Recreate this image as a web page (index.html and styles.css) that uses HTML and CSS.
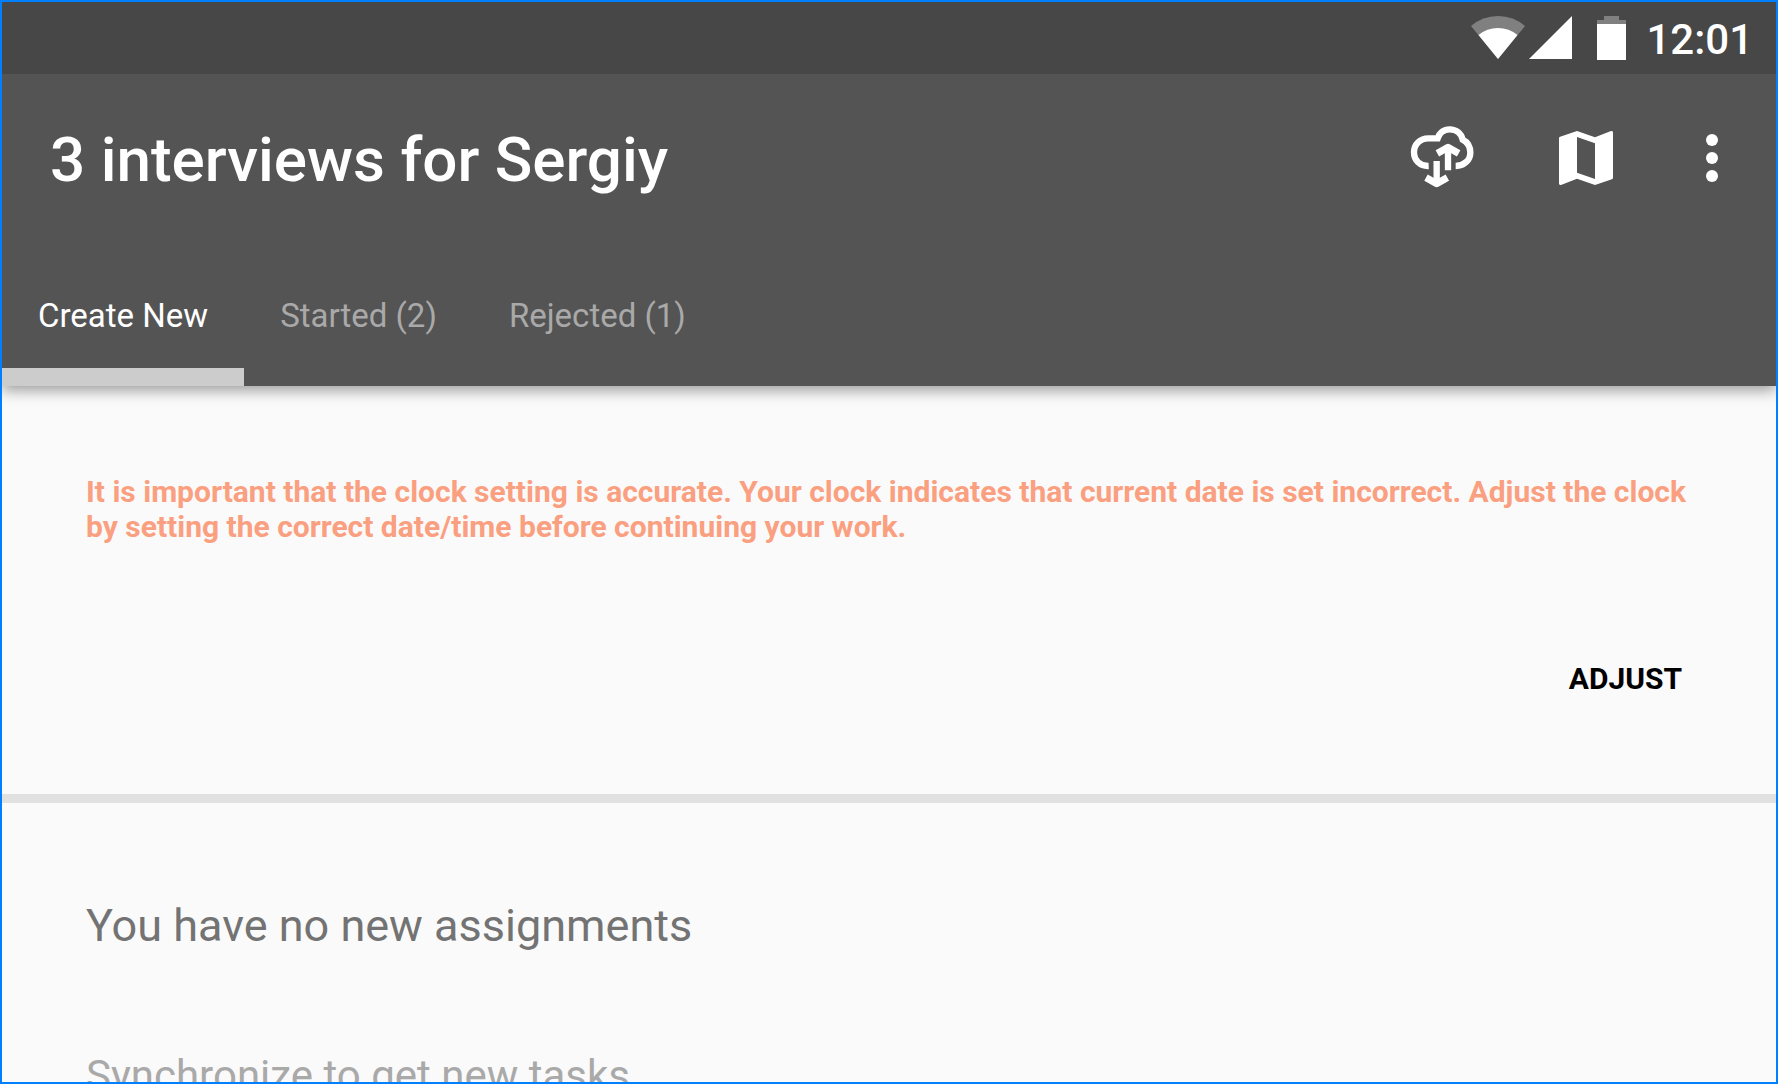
FILE: index.html
```html
<!DOCTYPE html>
<html lang="en">
<head>
  <meta charset="utf-8">
  <meta name="viewport" content="width=device-width, initial-scale=1">
  <title>3 interviews for Sergiy</title>
  <link rel="stylesheet" href="styles.css">
</head>
<body>
  <div class="screen">
    <div class="status-bar">
      <svg class="status-wifi" width="54" height="44" viewBox="0 0 54 44" aria-hidden="true">
        <path class="dim" d="M0 10Q11.500 0 27 0T54 10L27 43Z"/>
        <path class="solid" d="M7.500 19Q16 12 27 12T46.500 19L27 43Z"/>
      </svg>
      <svg class="status-signal" width="44" height="44" viewBox="0 0 44 44" aria-hidden="true">
        <path class="solid" d="M0 43L43 0V43Z"/>
      </svg>
      <svg class="status-battery" width="29" height="44" viewBox="0 0 29 44" aria-hidden="true">
        <path class="dim" d="M7 0H22V4H29V8H0V4H7Z"/>
        <path class="solid" d="M0 8H29V44H0Z"/>
      </svg>
      <time class="clock">12:01</time>
    </div>

    <header class="header">
      <div class="toolbar">
        <h1 class="title">3 interviews for Sergiy</h1>
        <button class="action" type="button" aria-label="Synchronize">
          <svg width="72" height="72" viewBox="0 6 216 216" aria-hidden="true">
            <g fill="none" stroke="currentColor" stroke-width="19" stroke-linejoin="round">
              <path stroke-linejoin="miter" d="M68 138C42 139 24 121 24 97C24 72 43 55 67 55H95C100 39 113 28 131 28C151 28 166 41 170 59C185 67 193 80 193 98C193 121 173 138 149 138"/>
              <path d="M126 151V82M92 123V190"/>
              <path stroke-width="21" d="M94 100L126 82L158 100M60 173L92 191L124 173"/>
            </g>
          </svg>
        </button>
        <button class="action" type="button" aria-label="Map">
          <svg width="72" height="72" viewBox="0 0 24 24" aria-hidden="true">
            <path fill="currentColor" d="M20.500 3l-.16.03L15 5.100 9 3 3.360 4.900c-.21.07-.36.25-.36.48V20.500c0 .28.22.5.5.5l.16-.03L9 18.900l6 2.100 5.640-1.900c.21-.07.36-.25.36-.48V3.500c0-.28-.22-.5-.5-.5zM15 19l-6-2.110V5l6 2.110V19z"/>
          </svg>
        </button>
        <button class="action action-menu" type="button" aria-label="More options">
          <svg width="72" height="72" viewBox="0 0 24 24" aria-hidden="true">
            <g fill="currentColor"><circle cx="12" cy="6" r="2"/><circle cx="12" cy="12" r="2"/><circle cx="12" cy="18" r="2"/></g>
          </svg>
        </button>
      </div>
      <div class="tabs" role="tablist">
        <button class="tab tab-active" type="button" role="tab" aria-selected="true">Create New</button>
        <button class="tab" type="button" role="tab" aria-selected="false">Started (2)</button>
        <button class="tab" type="button" role="tab" aria-selected="false">Rejected (1)</button>
      </div>
    </header>

    <main>
      <section class="notice">
        <p class="notice-text">It is important that the clock setting is accurate. Your clock indicates that current date is set incorrect. Adjust the clock by setting the correct date/time before continuing your work.</p>
        <button class="adjust" type="button">ADJUST</button>
      </section>
      <section class="empty">
        <p class="empty-title">You have no new assignments</p>
        <p class="empty-hint">Synchronize to get new tasks</p>
      </section>
    </main>
  </div>
</body>
</html>
```
FILE: styles.css
```css
* {
  box-sizing: border-box;
}

body {
  margin: 0;
  font-family: Roboto, "Liberation Sans", sans-serif;
}

h1, p {
  margin: 0;
}

button {
  padding: 0;
  border: 0;
  background: none;
  color: inherit;
  font: inherit;
  cursor: pointer;
}

svg {
  display: block;
}

.screen {
  height: 100vh;
  overflow: hidden;
  border: 2px solid #0080ff;
  background: #fafafa;
}

.status-bar {
  position: relative;
  z-index: 1;
  display: flex;
  align-items: center;
  height: 72px;
  padding-right: 23px;
  justify-content: flex-end;
  background: #474747;
  color: #fff;
}

.status-signal {
  margin: 0 24px 0 4px;
}

.clock {
  margin-left: 20px;
  padding-top: 4px;
  font-size: 42px;
  font-weight: 500;
  line-height: 48px;
}

.dim {
  fill: #808080;
}

.solid {
  fill: #fff;
}

.header {
  position: relative;
  background: #545454;
  color: #fff;
  box-shadow: 0 4px 14px rgba(0, 0, 0, 0.4);
}

.toolbar {
  display: flex;
  align-items: center;
  height: 168px;
  padding: 0 10px 0 48px;
}

.title {
  flex: 1;
  padding-top: 4px;
  font-size: 62px;
  font-weight: 500;
  line-height: 70px;
}

.action {
  display: flex;
  align-items: center;
  justify-content: center;
  width: 144px;
  height: 144px;
}

.action-menu {
  width: 108px;
}

.tabs {
  display: flex;
  height: 144px;
}

.tab {
  padding: 18px 36px 16px;
  font-size: 33px;
  color: #a9a9a9;
}

.tab-active {
  box-shadow: inset 0 -18px #ccc;
  color: #fff;
}

.notice {
  display: flex;
  flex-direction: column;
  align-items: flex-end;
  padding: 88px 84px 80px;
  border-bottom: 9px solid #e1e1e1;
}

.notice-text {
  width: 100%;
  font-size: 30px;
  font-weight: 700;
  line-height: 35px;
  color: #fa9f80;
}

.adjust {
  margin-top: 100px;
  padding: 10px;
  font-size: 30px;
  font-weight: 700;
  line-height: 50px;
  color: #000;
}

.empty {
  display: flex;
  flex-direction: column;
  gap: 96px;
  padding: 96px 84px;
  line-height: 54px;
}

.empty-title {
  font-size: 45px;
  color: #737373;
}

.empty-hint {
  font-size: 42px;
  color: #a9a9a9;
}
```
